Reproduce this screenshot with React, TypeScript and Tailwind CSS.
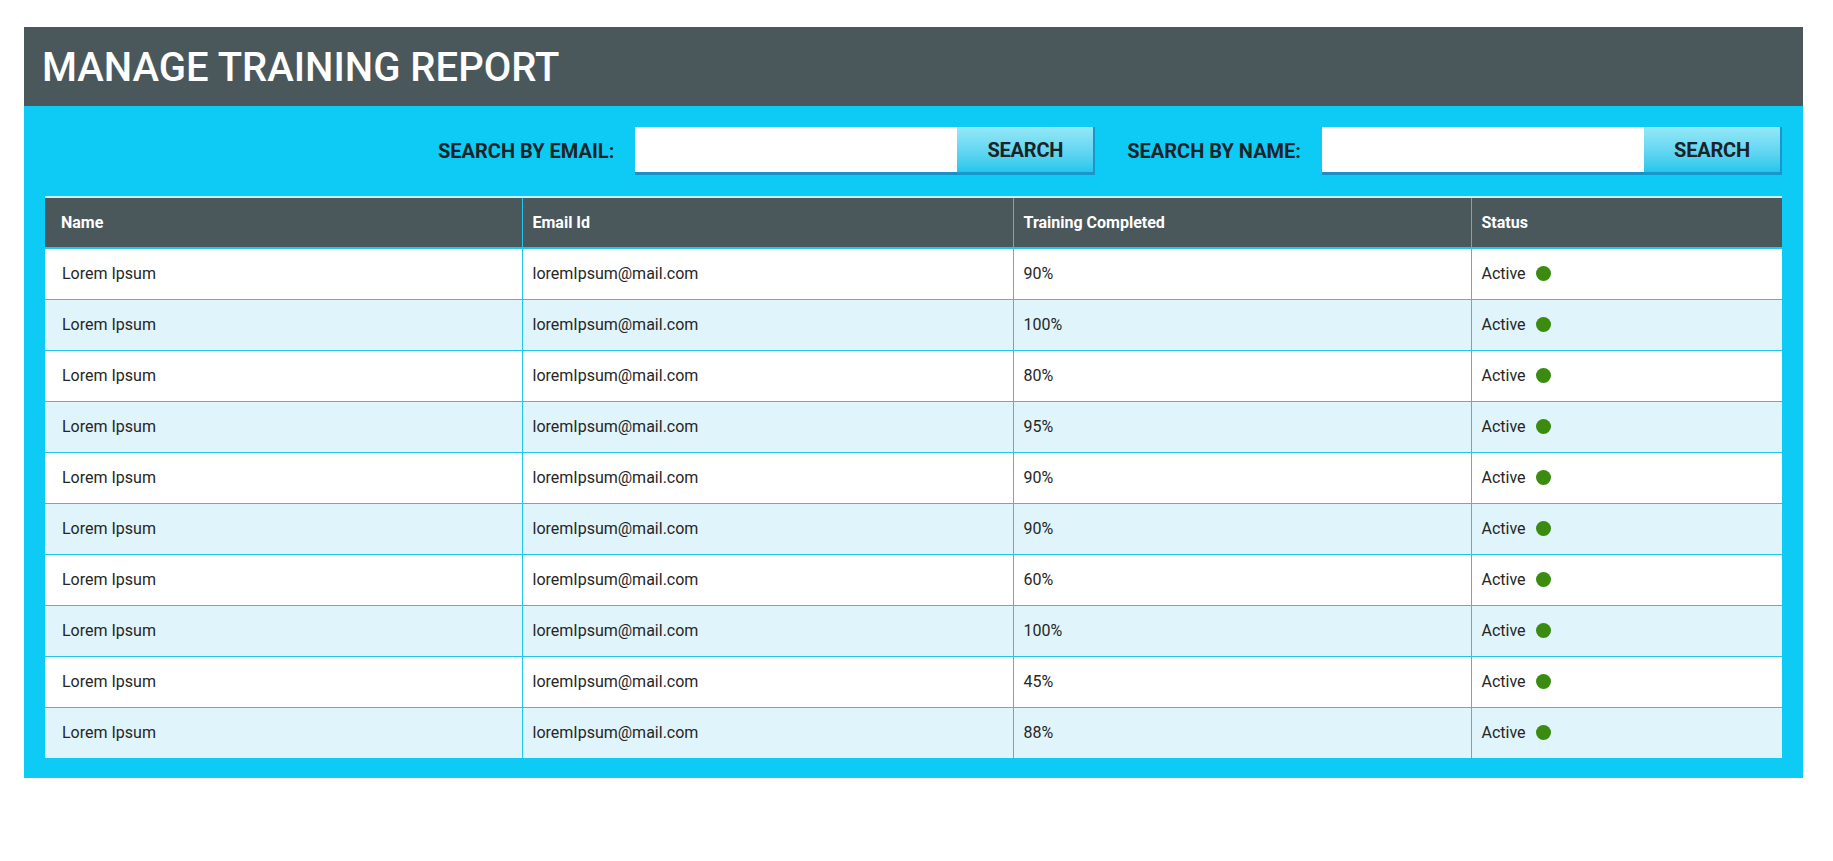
import React from "react";

const rows = [
  "90%", "100%", "80%", "95%", "90%", "90%", "60%", "100%", "45%", "88%",
];

function SearchGroup({ label, className = "" }: { label: string; className?: string }) {
  return (
    <div className={`flex items-center ${className}`}>
      <span className="text-[20px] font-bold text-[#1b2326] mr-[21px]">{label}</span>
      <div className="w-[322px] h-[48px] bg-white border-b-[3px] border-[#1b8fc6]" />
      <button className="w-[138px] h-[48px] bg-gradient-to-b from-[#93e8f7] to-[#1ec7ec] border-r-[2px] border-b-[3px] border-[#1997cc] text-[20px] font-bold tracking-[-0.2px] text-[#1b2326]">
        SEARCH
      </button>
    </div>
  );
}

export default function App() {
  return (
    <div className="w-[1833px] h-[861px] bg-white pt-[27px] pl-[24px] pr-[30px]" style={{ fontFamily: "Roboto, 'Noto Sans', sans-serif" }}>
      <div className="w-full">
        <div className="h-[79px] bg-[#4a585c] flex items-center pl-[18px]">
          <h1 className="text-[40px] font-medium text-white leading-none pt-[2px]">MANAGE TRAINING REPORT</h1>
        </div>
        <div className="bg-[#0ecbf6] px-[21px] pt-[21px] pb-[20px]">
          <div className="flex justify-end items-center">
            <SearchGroup label="SEARCH BY EMAIL:" />
            <SearchGroup label="SEARCH BY NAME:" className="ml-[32px]" />
          </div>
          <table className="w-full mt-[21px] border-collapse table-fixed text-[16px]">
            <colgroup>
              <col className="w-[477px]" />
              <col className="w-[491px]" />
              <col className="w-[458px]" />
              <col className="w-[311px]" />
            </colgroup>
            <thead>
              <tr className="bg-[#4a585c] text-white h-[51px] border-t-[2px] border-t-[#c8f1fc] border-b-[2px] border-b-[#22c6ef]">
                <th className="text-left font-bold pl-[16px]">Name</th>
                <th className="text-left font-bold pl-[10px] border-l border-[#22c6ef]">Email Id</th>
                <th className="text-left font-bold pl-[10px] border-l border-[#22c6ef]">Training Completed</th>
                <th className="text-left font-bold pl-[10px] border-l border-[#22c6ef]">Status</th>
              </tr>
            </thead>
            <tbody>
              {rows.map((pct, i) => (
                <tr
                  key={i}
                  className={`h-[51px] text-[#262626] ${i % 2 === 0 ? "bg-white" : "bg-[#e0f4fb]"} ${i < rows.length - 1 ? "border-b border-[#22c6ef]" : ""}`}
                >
                  <td className="pl-[17px]">Lorem Ipsum</td>
                  <td className="pl-[10px] border-l border-[#22c6ef]">loremIpsum@mail.com</td>
                  <td className="pl-[10px] border-l border-[#22c6ef]">{pct}</td>
                  <td className="pl-[10px] border-l border-[#22c6ef]">
                    <span className="inline-flex items-center">
                      Active
                      <span className="ml-[10px] w-[15px] h-[15px] rounded-full bg-[#3a8b0f] inline-block" />
                    </span>
                  </td>
                </tr>
              ))}
            </tbody>
          </table>
        </div>
      </div>
    </div>
  );
}
